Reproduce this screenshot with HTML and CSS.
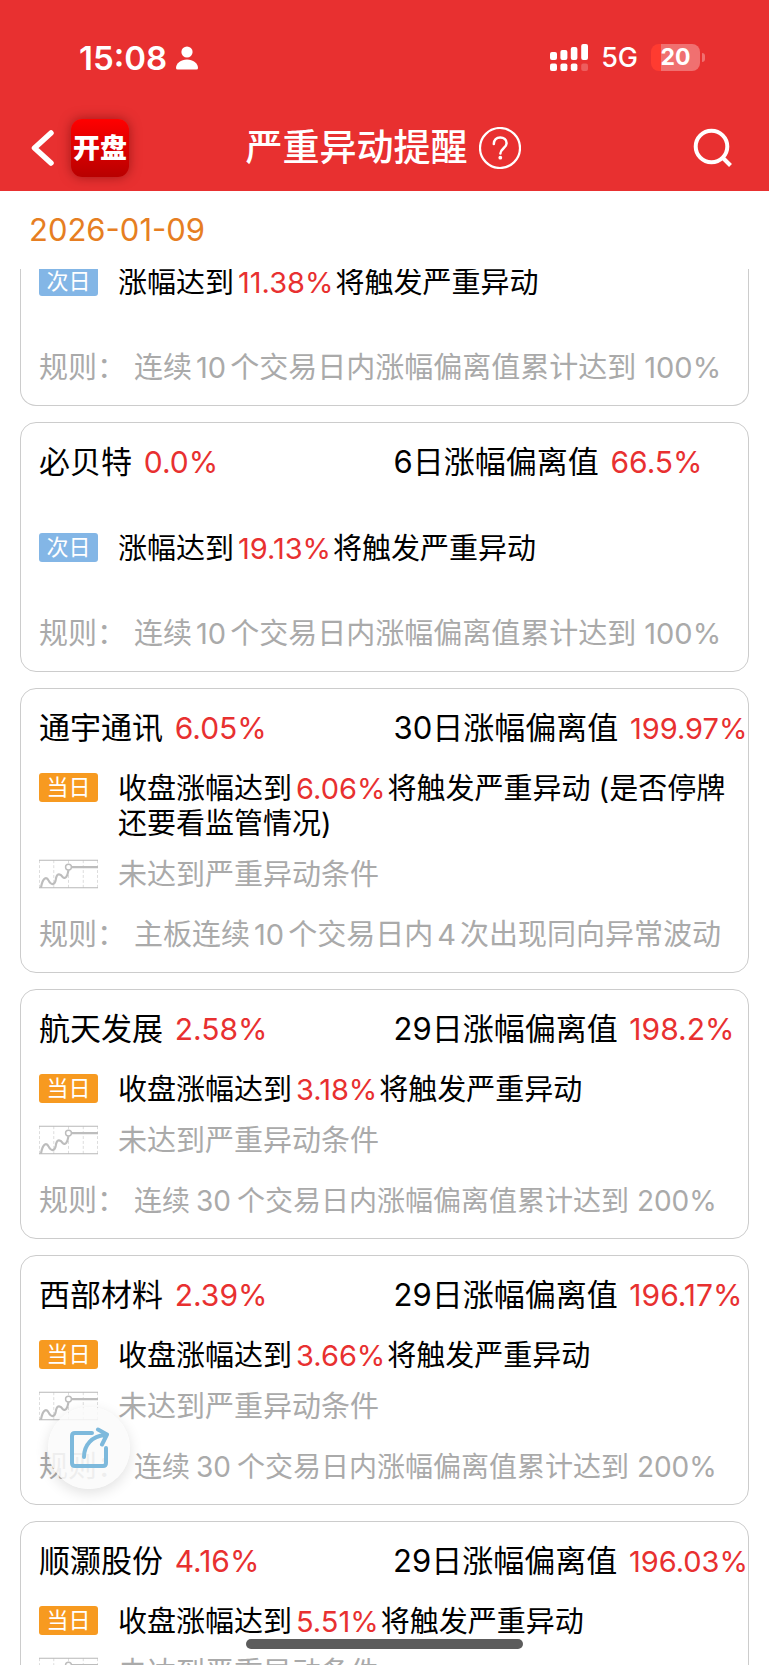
FILE: index.html
```html
<!DOCTYPE html>
<html lang="zh-CN">
<head>
<meta charset="utf-8">
<meta name="viewport" content="width=device-width, initial-scale=1">
<title>严重异动提醒</title>
<link rel="stylesheet" href="styles.css">
</head>
<body>
<svg class="defs" aria-hidden="true">
  <symbol id="trend" viewBox="0 0 60 30">
    <path d="M.5 1v28M15 1v28M30 1v28M45 1v28M59.5 1v28" stroke="#dcdcdc" stroke-width="1" stroke-dasharray="3 2" fill="none"/>
    <path d="M0 1h60M0 29h60" stroke="#b8b8b8" stroke-width="1.200"/>
    <path d="M2 29C4 17 8 18 10 22c2 4 6 5 7-1 1-8 5-6 7-3 3 3 5-1 6-7M33 8h27" stroke="#bdbdbd" stroke-width="2.200" fill="none"/>
    <circle cx="30" cy="8" r="3" fill="#fff" stroke="#bdbdbd" stroke-width="1.500"/>
  </symbol>
</svg>
<div class="app">
  <header class="top">
    <div class="status">
      <div class="status-side">
        <span class="clock">15:08</span>
        <svg class="person" viewBox="0 0 22 24" fill="#fff"><circle cx="11" cy="6" r="5.6"/><path d="M0 22C0 17 5 13.400 11 13.400S22 17 22 22q0 1.500-1.500 1.500h-19Q0 23.500 0 22z"/></svg>
      </div>
      <div class="status-side">
        <svg class="signal" viewBox="0 0 38 28" fill="#fff">
          <rect x="0" y="8" width="7" height="8" rx="2"/><rect x="10.400" y="6" width="7" height="10" rx="2"/><rect x="20.800" y="3" width="6.600" height="13" rx="2"/><rect x="31.200" y="0" width="6.800" height="16" rx="2"/>
          <rect x="0" y="19.500" width="7" height="7.500" rx="2"/><rect x="10.400" y="19.500" width="7" height="7.500" rx="2"/><rect x="20.800" y="19.500" width="6.600" height="7.500" rx="2"/><rect x="31.200" y="19.500" width="6.800" height="7.500" rx="2" opacity=".22"/>
        </svg>
        <span class="network">5G</span>
        <span class="battery">20</span>
      </div>
    </div>
    <nav class="nav">
      <div class="nav-left">
        <button class="icon-btn" aria-label="返回"><svg class="back" viewBox="0 0 24 36"><path d="M20 3 3.500 18 20 33" fill="none" stroke="#fff" stroke-width="5.500" stroke-linecap="round" stroke-linejoin="round"/></svg></button>
        <span class="logo">开盘</span>
      </div>
      <div class="nav-title">
        <h1 class="title">严重异动提醒</h1>
        <button class="icon-btn" aria-label="帮助"><svg class="help" viewBox="0 0 42 42" fill="none" stroke="#fff"><circle cx="21" cy="21" r="20" stroke-width="2.200"/><path d="M14.800 17c0-4.200 2.800-6.600 6.400-6.600s6.400 2.400 6.400 5.800c0 4.800-6.200 5.300-6.200 10.400" stroke-width="2.500" stroke-linecap="round"/><circle cx="21.300" cy="30.700" r="1.900" fill="#fff" stroke="none"/></svg></button>
      </div>
      <button class="icon-btn nav-search" aria-label="搜索"><svg class="search" viewBox="0 0 40 40" fill="none" stroke="#fff" stroke-width="4"><circle cx="18.500" cy="18.500" r="15.800"/><path d="m29.500 29.500 8 8"/></svg></button>
    </nav>
  </header>

  <time class="date" datetime="2026-01-09">2026-01-09</time>

  <main class="list">
    <article class="card card-scrolled">
      <div class="events">
        <div class="event"><span class="tag tag-next">次日</span><p class="text">涨幅达到<em class="rate">11.38%</em>将触发严重异动</p></div>
      </div>
      <p class="rule">规则：<span class="rule-text">连续<span class="num">10</span>个交易日内涨幅偏离值累计达到 100%</span></p>
    </article>

    <article class="card">
      <div class="head"><h2 class="name">必贝特 <span class="red">0.0%</span></h2><p class="name">6日涨幅偏离值 <span class="red">66.5%</span></p></div>
      <div class="events">
        <div class="event"><span class="tag tag-next">次日</span><p class="text">涨幅达到<em class="rate">19.13%</em>将触发严重异动</p></div>
      </div>
      <p class="rule">规则：<span class="rule-text">连续<span class="num">10</span>个交易日内涨幅偏离值累计达到 100%</span></p>
    </article>

    <article class="card">
      <div class="head"><h2 class="name">通宇通讯 <span class="red">6.05%</span></h2><p class="name">30日涨幅偏离值 <span class="red small">199.97%</span></p></div>
      <div class="events">
        <div class="event"><span class="tag tag-today">当日</span><p class="text">收盘涨幅达到<em class="rate">6.06%</em>将触发严重异动 (是否停牌还要看监管情况)</p></div>
        <div class="event muted"><svg class="trend"><use href="#trend"/></svg><p class="text">未达到严重异动条件</p></div>
      </div>
      <p class="rule">规则：<span class="rule-text">主板连续<span class="num">10</span>个交易日内<span class="num">4</span>次出现同向异常波动</span></p>
    </article>

    <article class="card">
      <div class="head"><h2 class="name">航天发展 <span class="red">2.58%</span></h2><p class="name">29日涨幅偏离值 <span class="red">198.2%</span></p></div>
      <div class="events">
        <div class="event"><span class="tag tag-today">当日</span><p class="text">收盘涨幅达到<em class="rate">3.18%</em>将触发严重异动</p></div>
        <div class="event muted"><svg class="trend"><use href="#trend"/></svg><p class="text">未达到严重异动条件</p></div>
      </div>
      <p class="rule">规则：<span class="rule-text rule-long">连续<span class="num">30</span>个交易日内涨幅偏离值累计达到 200%</span></p>
    </article>

    <article class="card">
      <div class="head"><h2 class="name">西部材料 <span class="red">2.39%</span></h2><p class="name">29日涨幅偏离值 <span class="red">196.17%</span></p></div>
      <div class="events">
        <div class="event"><span class="tag tag-today">当日</span><p class="text">收盘涨幅达到<em class="rate">3.66%</em>将触发严重异动</p></div>
        <div class="event muted"><svg class="trend"><use href="#trend"/></svg><p class="text">未达到严重异动条件</p></div>
      </div>
      <p class="rule">规则：<span class="rule-text rule-long">连续<span class="num">30</span>个交易日内涨幅偏离值累计达到 200%</span></p>
    </article>

    <article class="card">
      <div class="head"><h2 class="name">顺灏股份 <span class="red">4.16%</span></h2><p class="name">29日涨幅偏离值 <span class="red small">196.03%</span></p></div>
      <div class="events">
        <div class="event"><span class="tag tag-today">当日</span><p class="text">收盘涨幅达到<em class="rate">5.51%</em>将触发严重异动</p></div>
        <div class="event muted"><svg class="trend"><use href="#trend"/></svg><p class="text">未达到严重异动条件</p></div>
      </div>
    </article>
  </main>
</div>

<button class="share" aria-label="分享"><svg class="share-icon" viewBox="0 0 40 42" fill="none" stroke="#7db9dc" stroke-width="4" stroke-linecap="round" stroke-linejoin="round"><path d="M23 6H6Q3 6 3 9v27q0 3 3 3h28q3 0 3-3V21"/><path d="M15 30C15 18 23 9 36 8M29 2.500l9 5-5 10"/></svg></button>
<div class="home-bar"></div>
</body>
</html>
```
FILE: styles.css
```css
* {
  box-sizing: border-box;
}

body {
  margin: 0;
  background: #fff;
  color: #000;
  font-family: Inter, "Noto Sans CJK SC", sans-serif;
}

h1, h2, p {
  margin: 0;
  font-weight: 400;
}

.defs {
  position: absolute;
  width: 0;
  height: 0;
}

.app {
  display: flex;
  flex-direction: column;
  height: 100vh;
}

.top {
  flex: none;
  background: #e83030;
  color: #fff;
}

.status {
  display: flex;
  justify-content: space-between;
  align-items: center;
  height: 105px;
  padding: 10px 64px 0 79px;
}

.status-side {
  display: flex;
  align-items: center;
}

.clock {
  font-size: 33px;
  font-weight: 600;
}

.person {
  width: 22px;
  height: 24px;
  margin-left: 9px;
}

.signal {
  width: 38px;
  height: 28px;
}

.network {
  margin: 0 13px;
  font-size: 27px;
  font-weight: 500;
}

.battery {
  position: relative;
  width: 49px;
  height: 27px;
  margin-right: 5px;
  border-radius: 8px;
  background: linear-gradient(90deg, #ff3b30 10px, #f07070 10px);
  font-size: 23px;
  font-weight: 700;
  line-height: 27px;
  text-align: center;
}

.battery::after {
  content: "";
  position: absolute;
  top: 9px;
  right: -5px;
  width: 3px;
  height: 9px;
  border-radius: 0 3px 3px 0;
  background: #f07070;
}

.nav {
  display: grid;
  grid-template-columns: 1fr auto 1fr;
  align-items: center;
  height: 86px;
  padding: 0 36px 0 31px;
}

.nav-left {
  display: flex;
  align-items: center;
  gap: 16px;
}

.icon-btn {
  display: flex;
  padding: 0;
  border: 0;
  background: none;
}

.back {
  width: 24px;
  height: 36px;
}

.logo {
  display: flex;
  justify-content: center;
  width: 58px;
  height: 58px;
  border-radius: 11px;
  background: linear-gradient(#f00, #b80000);
  box-shadow: 0 0 12px rgba(90, 0, 0, .5);
  font-size: 27px;
  font-weight: 900;
  line-height: 60px;
  white-space: nowrap;
}

.nav-title {
  display: flex;
  align-items: center;
  gap: 11px;
  padding-left: 2px;
}

.title {
  font-size: 37px;
  font-weight: 500;
  line-height: 48px;
}

.help {
  width: 42px;
  height: 42px;
}

.nav-search {
  justify-self: end;
}

.search {
  width: 40px;
  height: 40px;
}

.date {
  flex: none;
  padding: 0 29px;
  color: #e67e22;
  font-size: 31px;
  line-height: 78px;
}

.list {
  display: flex;
  flex: 1;
  flex-direction: column;
  gap: 16px;
  min-height: 0;
  padding: 0 20px;
  overflow: hidden;
}

.card {
  flex: none;
  padding-left: 18px;
  border: 1px solid #ccc;
  border-radius: 16px;
}

.card-scrolled {
  margin-top: -35px;
  border-top: 0;
  border-radius: 0 0 16px 16px;
}

.head {
  display: grid;
  grid-template-columns: 1fr 1fr;
}

.name {
  font-size: 31px;
  line-height: 77px;
  white-space: nowrap;
}

.red {
  margin-left: 3px;
  color: #e83030;
  font-size: 30px;
  line-height: 1;
}

.small {
  font-size: 29px;
}

.events {
  display: flex;
  flex-direction: column;
  justify-content: center;
  gap: 16px;
  min-height: 94px;
  padding: 5px 20px 3px 0;
}

.event {
  display: grid;
  grid-template-columns: 59px 1fr;
  column-gap: 20px;
}

.text {
  font-size: 29px;
  line-height: 35px;
}

.tag {
  height: 29px;
  margin-top: 2px;
  border-radius: 3px;
  color: #fff;
  font-size: 22px;
  line-height: 28px;
  text-align: center;
}

.tag-next {
  background: #83b6e6;
}

.tag-today {
  background: #f79a20;
}

.rate {
  margin: 0 2px 0 4px;
  color: #e83030;
  font-style: normal;
}

.trend {
  width: 59px;
  height: 30px;
  margin-top: 2px;
}

.muted,
.rule {
  color: #aaa;
}

.rule {
  padding-top: 2px;
  font-size: 29px;
  line-height: 75px;
  white-space: nowrap;
}

.rule-text {
  margin-left: 8px;
  line-height: 1;
}

.rule-long {
  font-size: 28px;
}

.num {
  margin: 0 4px;
}

.rule-long .num {
  margin: 0 6px;
}

.share {
  position: fixed;
  bottom: 176px;
  left: 48px;
  display: flex;
  align-items: center;
  justify-content: center;
  width: 82px;
  height: 82px;
  padding: 0;
  border: 0;
  border-radius: 50%;
  background: rgba(250, 250, 250, .85);
  box-shadow: 0 4px 14px rgba(0, 0, 0, .12);
}

.share-icon {
  width: 40px;
  height: 42px;
}

.home-bar {
  position: fixed;
  right: 0;
  bottom: 16px;
  left: 0;
  width: 36%;
  height: 10px;
  margin: 0 auto;
  border-radius: 5px;
  background: #5c5c5c;
}
```
